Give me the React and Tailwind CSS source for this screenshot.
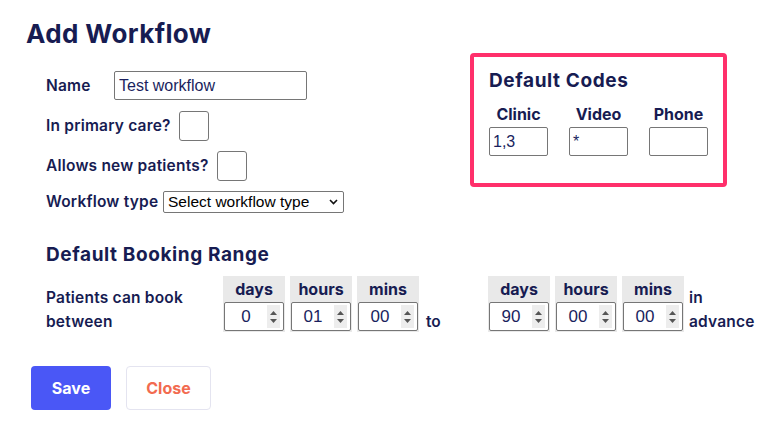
import React from 'react';

const navy = 'text-[#171c52]';

const Spinner = ({ label, value }) => (
  <div className="w-[62px] bg-[#e9e9e9] flex flex-col items-stretch px-px pb-px">
    <div className={`h-[26px] flex items-center justify-center text-[16px] font-bold ${navy}`}>{label}</div>
    <div className="h-[29px] bg-white border border-[#767676] rounded-[2px] flex items-center">
      <span className="flex-1 text-center text-[17px] text-[#1a1f5e] font-['Liberation_Sans',sans-serif]">{value}</span>
      <span className="w-[13px] h-[23px] mr-[3px] bg-[#ededed] flex flex-col items-center justify-center gap-[4px]">
        <svg width="7" height="4" viewBox="0 0 7 4"><path d="M0 4 L3.5 0 L7 4 Z" fill="#555" /></svg>
        <svg width="7" height="4" viewBox="0 0 7 4"><path d="M0 0 L3.5 4 L7 0 Z" fill="#555" /></svg>
      </span>
    </div>
  </div>
);

const Box = ({ className = '' }) => (
  <div className={`w-[30px] h-[30px] border border-[#767676] rounded-[3px] bg-white ${className}`} />
);

const CodeCol = ({ label, value }) => (
  <div className="w-[59px] flex flex-col items-center">
    <div className={`h-[26px] flex items-center text-[16px] font-bold ${navy}`}>{label}</div>
    <div className="w-[59px] h-[29px] border border-[#767676] rounded-[2px] bg-white flex items-center px-[3px] text-[16px] text-[#1a1f5e] font-['Liberation_Sans',sans-serif]">{value}</div>
  </div>
);

export default function App() {
  return (
    <div className={`w-[784px] h-[427px] bg-white font-['Inter',sans-serif] ${navy} pl-[26px] pt-[18px]`}>
      <div className="flex">
        <div className="w-[444px]">
          <h1 className="text-[26px] leading-[32px] font-bold tracking-[0.4px]">Add Workflow</h1>
          <div className="pl-[20px] pt-[21px] flex flex-col gap-[11px] text-[15.5px] tracking-[0.2px] font-semibold">
            <div className="flex items-center h-[29px]">
              <span className="w-[68px]">Name</span>
              <div className="w-[193px] h-[29px] border border-[#767676] rounded-[2px] flex items-center px-[4px] text-[16px] tracking-normal font-normal text-[#1a1f5e] font-['Liberation_Sans',sans-serif]">Test workflow</div>
            </div>
            <div className="flex items-center h-[29px]">
              <span className="w-[133px]">In primary care?</span>
              <Box />
            </div>
            <div className="flex items-center h-[29px]">
              <span className="w-[171px]">Allows new patients?</span>
              <Box />
            </div>
            <div className="flex items-center h-[22px]">
              <span className="w-[117px]">Workflow type</span>
              <div className="w-[181px] h-[22px] border border-[#767676] rounded-[2px] flex items-center justify-between pl-[4px] pr-[5px] text-[15.5px] tracking-normal font-normal text-black font-['Liberation_Sans',sans-serif]">
                <span>Select workflow type</span>
                <svg width="9" height="6" viewBox="0 0 9 6"><path d="M1 1 L4.5 4.5 L8 1" stroke="#111" strokeWidth="1.6" fill="none" /></svg>
              </div>
            </div>
          </div>
        </div>
        <div className="mt-[35px] w-[257px] h-[134px] border-[4px] border-[#ff2f6b] rounded-[4px] pl-[15px] pt-[12px]">
          <div className="text-[19px] leading-[24px] font-bold tracking-[0.6px]">Default Codes</div>
          <div className="flex gap-[21px] mt-[8px]">
            <CodeCol label="Clinic" value="1,3" />
            <CodeCol label="Video" value="*" />
            <CodeCol label="Phone" value="" />
          </div>
        </div>
      </div>

      <div className="pl-[20px] mt-[30px]">
        <div className="text-[19px] leading-[24px] font-bold tracking-[0.6px]">Default Booking Range</div>
        <div className="flex items-end mt-[9px]">
          <div className="w-[177px] text-[15.5px] tracking-[0.2px] leading-[24px] font-semibold -mb-[2px]">Patients can book<br />between</div>
          <div className="flex gap-[5px]">
            <Spinner label="days" value="0" />
            <Spinner label="hours" value="01" />
            <Spinner label="mins" value="00" />
          </div>
          <div className="ml-[7px] w-[62px] text-[15.5px] leading-[24px] font-semibold -mb-[2px]">to</div>
          <div className="flex gap-[5px]">
            <Spinner label="days" value="90" />
            <Spinner label="hours" value="00" />
            <Spinner label="mins" value="00" />
          </div>
          <div className="ml-[5px] text-[15.5px] tracking-[0.2px] leading-[24px] font-semibold -mb-[2px]">in<br />advance</div>
        </div>
      </div>

      <div className="flex gap-[15px] mt-[34px] pl-[5px]">
        <button className="w-[80px] h-[44px] bg-[#4a57f6] rounded-[4px] text-white text-[16px] font-bold">Save</button>
        <button className="w-[85px] h-[44px] bg-white border border-[#e4e4f0] rounded-[4px] text-[#f26b50] text-[16px] font-bold">Close</button>
      </div>
    </div>
  );
}
